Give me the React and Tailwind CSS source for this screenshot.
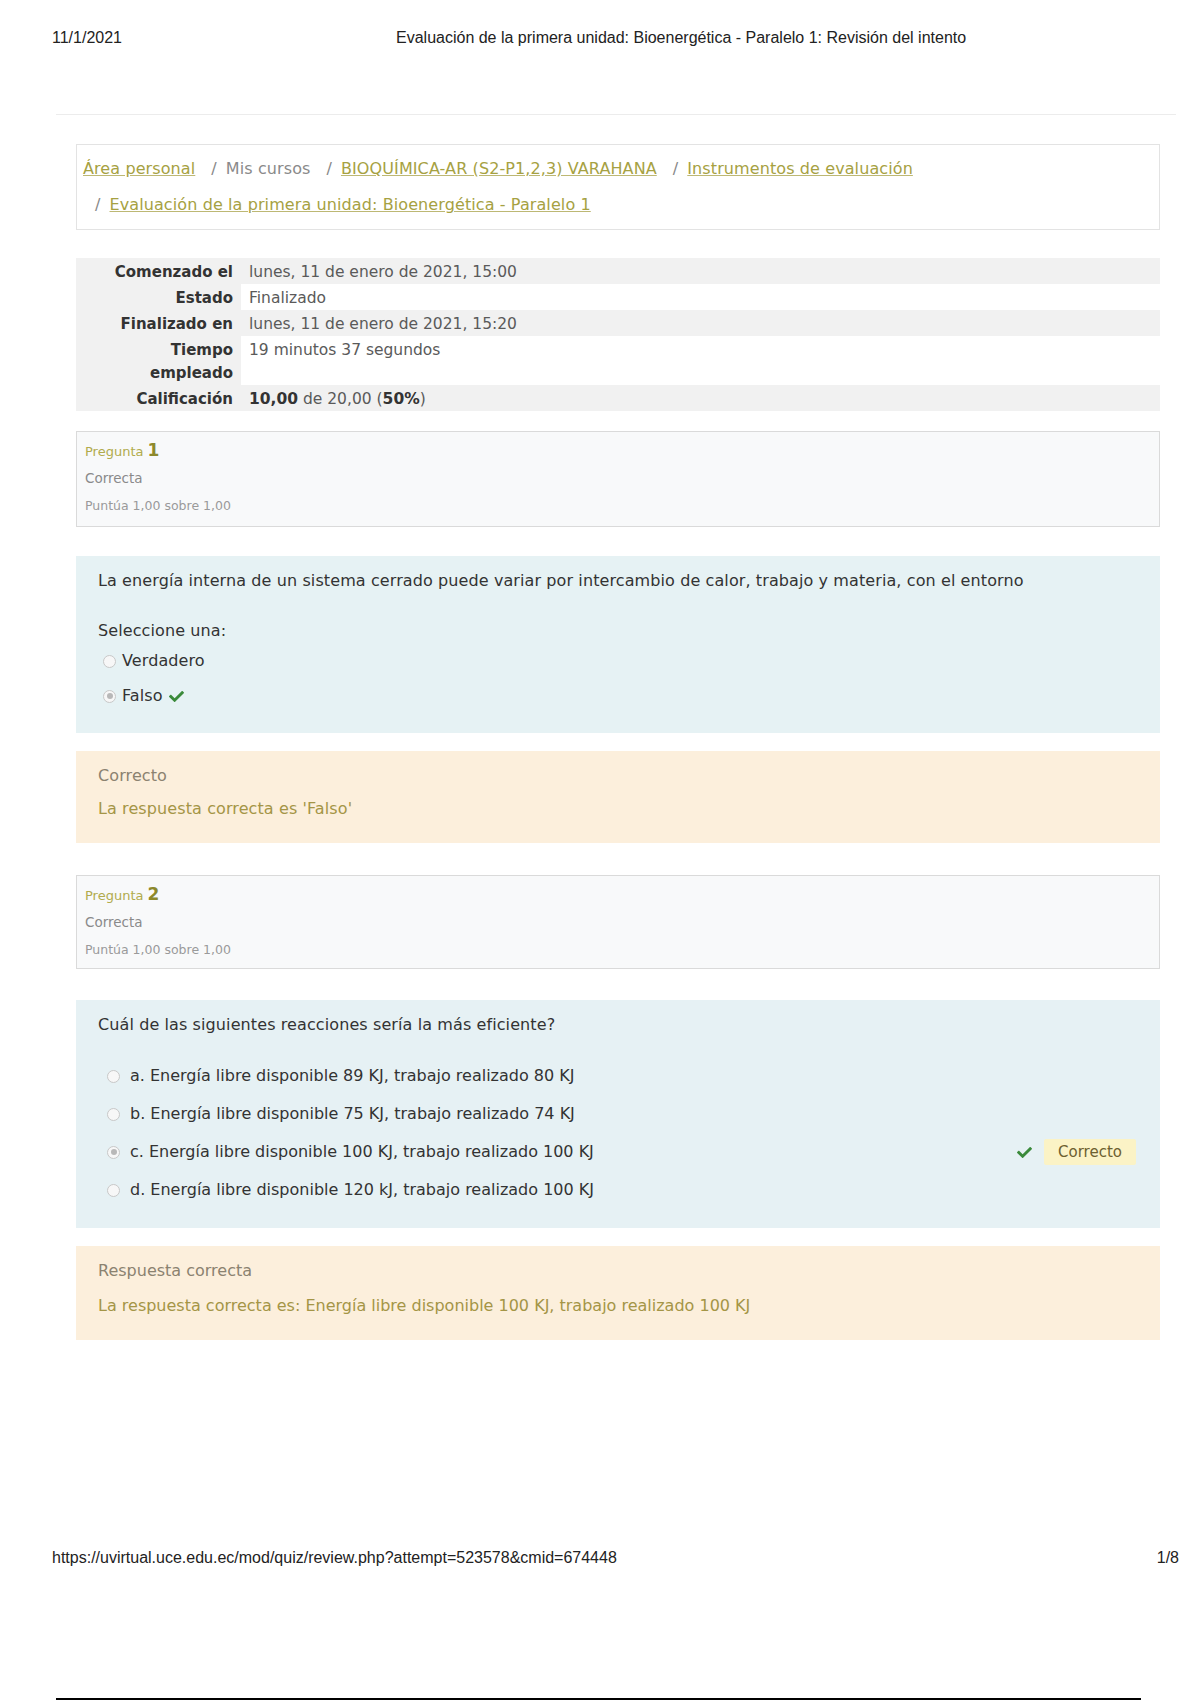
import React from "react";
import { FaCheck } from "react-icons/fa";

function Radio({ checked }) {
  return (
    <span className="w-[13px] h-[13px] rounded-full border border-[#c8c8c8] bg-[#f7f7f7] flex items-center justify-center shrink-0">
      {checked && <span className="w-[6px] h-[6px] rounded-full bg-[#b8b8b8]" />}
    </span>
  );
}

function Check() {
  return <FaCheck className="text-[#3a8a3a] shrink-0" size={15} />;
}

function Info({ n, h }) {
  return (
    <div className={`border border-[#dadada] bg-[#f8f9fa] pl-[8px] pt-[8px] ${h}`}>
      <div className="leading-[20px] flex items-baseline gap-[4px]">
        <span className="text-[13px] text-[#b1ab4d]">Pregunta</span>
        <span className="text-[17px] font-bold text-[#8d892c]">{n}</span>
      </div>
      <div className="mt-[7px] text-[13.5px] leading-[18px] text-[#8a8a8a]">Correcta</div>
      <div className="mt-[10px] text-[12.5px] leading-[18px] text-[#9a9a9a]">Puntúa 1,00 sobre 1,00</div>
    </div>
  );
}

const crumbs = [
  { t: "Área personal", link: true },
  { t: "Mis cursos", link: false },
  { t: "BIOQUÍMICA-AR (S2-P1,2,3) VARAHANA", link: true },
  { t: "Instrumentos de evaluación", link: true },
  { t: "Evaluación de la primera unidad: Bioenergética - Paralelo 1", link: true },
];

const rows = [
  { l: ["Comenzado el"], v: "lunes, 11 de enero de 2021, 15:00" },
  { l: ["Estado"], v: "Finalizado" },
  { l: ["Finalizado en"], v: "lunes, 11 de enero de 2021, 15:20" },
  { l: ["Tiempo", "empleado"], v: "19 minutos 37 segundos" },
  {
    l: ["Calificación"],
    v: (
      <>
        <b className="text-[#333]">10,00</b> de 20,00 (<b className="text-[#333]">50%</b>)
      </>
    ),
  },
];

const options = [
  { t: "a. Energía libre disponible 89 KJ, trabajo realizado 80 KJ" },
  { t: "b. Energía libre disponible 75 KJ, trabajo realizado 74 KJ" },
  { t: "c. Energía libre disponible 100 KJ, trabajo realizado 100 KJ", checked: true },
  { t: "d. Energía libre disponible 120 kJ, trabajo realizado 100 KJ" },
];

export default function App() {
  return (
    <div className="w-[1200px] h-[1700px] bg-white flex flex-col overflow-hidden">
      <div className="pl-[52px] pt-[29px] flex text-[16px] leading-[18px] text-[#222] font-['Liberation_Sans',Arial,sans-serif]">
        <span className="w-[344px]">11/1/2021</span>
        <span>Evaluación de la primera unidad: Bioenergética - Paralelo 1: Revisión del intento</span>
      </div>
      <div className="mt-[67px] ml-[56px] w-[1120px] h-px bg-[#ececec]" />

      <div className="ml-[76px] w-[1084px] mt-[29px] font-['DejaVu_Sans',sans-serif] text-[16px] tracking-[0.1px] text-[#333]">
        <div className="border border-[#e3e3e3] pt-[12px] pb-[12px] pl-[6px]">
          <div className="flex flex-wrap gap-y-[12px] leading-[24px]">
            {crumbs.map((c, i) => (
              <span key={i} className="flex mr-[4px]">
                {i > 0 && <span className="pl-[12px] pr-[9px] text-[#888]">/</span>}
                {c.link ? (
                  <span className="underline text-[#a6a142] decoration-[#bdb874]">{c.t}</span>
                ) : (
                  <span className="text-[#8a8a8a]">{c.t}</span>
                )}
              </span>
            ))}
          </div>
        </div>

        <div className="mt-[28px] grid grid-cols-[165px_1fr] leading-[23px] tracking-normal">
          {rows.map((r, i) => (
            <React.Fragment key={i}>
              <div className="bg-[#f1f1f1] text-right pr-[8px] pt-[2.5px] pb-[0.5px] text-[15px] font-bold text-[#333]">
                {r.l.map((x, j) => (
                  <div key={j}>{x}</div>
                ))}
              </div>
              <div className={`pl-[8px] pt-[2.5px] pb-[0.5px] text-[15.5px] text-[#5a5a5a] ${i % 2 === 0 ? "bg-[#f1f1f1]" : "bg-white"}`}>{r.v}</div>
            </React.Fragment>
          ))}
        </div>

        <div className="mt-[20px] tracking-normal">
          <Info n="1" h="h-[96px]" />
        </div>

        <div className="mt-[29px] bg-[#e6f2f4] pl-[22px] pr-[22px] pt-[14px] pb-[26px] leading-[22px]">
          <p>La energía interna de un sistema cerrado puede variar por intercambio de calor, trabajo y materia, con el entorno</p>
          <p className="mt-[28px]">Seleccione una:</p>
          <div className="mt-[8px] pl-[5px] flex items-center gap-[6px]">
            <Radio />
            <span>Verdadero</span>
          </div>
          <div className="mt-[13px] pl-[5px] flex items-center gap-[6px]">
            <Radio checked />
            <span>Falso</span>
            <Check />
          </div>
        </div>

        <div className="mt-[18px] bg-[#fcefdc] pl-[22px] pt-[14px] pb-[23px] leading-[22px]">
          <div className="text-[#8b8270]">Correcto</div>
          <div className="mt-[11px] text-[#a49546]">La respuesta correcta es 'Falso'</div>
        </div>

        <div className="mt-[32px] tracking-normal">
          <Info n="2" h="h-[94px]" />
        </div>

        <div className="mt-[31px] bg-[#e6f1f4] pl-[22px] pr-[24px] pt-[14px] pb-[25px] leading-[22px]">
          <p>Cuál de las siguientes reacciones sería la más eficiente?</p>
          <div className="mt-[27px] flex flex-col gap-[12px] tracking-normal">
            {options.map((o, i) => (
              <div key={i} className="h-[26px] pl-[9px] flex items-center gap-[10px]">
                <Radio checked={o.checked} />
                <span>{o.t}</span>
                {o.checked && (
                  <span className="ml-auto flex items-center gap-[12px]">
                    <Check />
                    <span className="bg-[#fbf3c6] text-[#6d6030] text-[15px] px-[14px] h-[26px] leading-[26px] rounded-[2px]">Correcto</span>
                  </span>
                )}
              </div>
            ))}
          </div>
        </div>

        <div className="mt-[18px] bg-[#fcefdc] pl-[22px] pt-[14px] pb-[23px] leading-[22px] tracking-normal">
          <div className="text-[#8b8270]">Respuesta correcta</div>
          <div className="mt-[13px] text-[#a49546]">La respuesta correcta es: Energía libre disponible 100 KJ, trabajo realizado 100 KJ</div>
        </div>
      </div>

      <div className="mt-[209px] pl-[52px] pr-[21px] flex justify-between text-[16px] leading-[18px] text-[#222] font-['Liberation_Sans',Arial,sans-serif]">
        <span>https://uvirtual.uce.edu.ec/mod/quiz/review.php?attempt=523578&amp;cmid=674448</span>
        <span>1/8</span>
      </div>
      <div className="mt-[131px] ml-[56px] w-[1085px] h-[2px] bg-black" />
    </div>
  );
}
